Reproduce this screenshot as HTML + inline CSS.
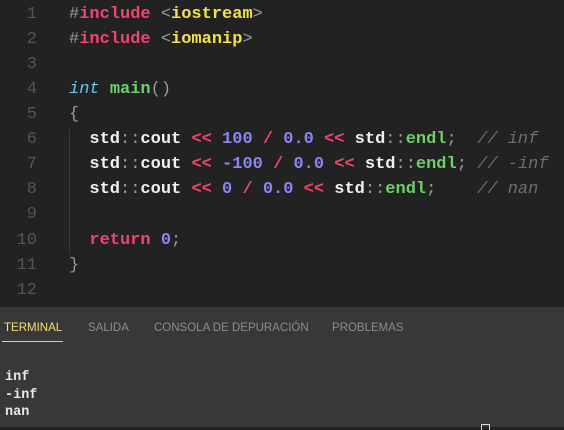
<!DOCTYPE html>
<html><head><style>
body{margin:0;width:564px;height:427px;overflow:hidden;background:#222222;}
.ed{position:absolute;left:0;top:0;width:564px;height:307px;background:#222222;font-family:"Liberation Mono",monospace;font-size:17px;}
.ln{position:absolute;left:0;width:37px;text-align:right;color:#555555;}
.c{position:absolute;left:69px;white-space:pre;color:#f0f0f0;font-weight:bold;}
.k{color:#f0446f}.s{color:#f2e24a}.g{color:#9a9a9a;font-weight:normal}.t{color:#5fc9ef;font-style:italic;font-weight:normal}
.f{color:#6fcf68}.n{color:#8a86f0}.cm{color:#6e6e6e;font-style:italic;font-weight:normal}
.guide{position:absolute;left:69px;top:129px;width:1px;height:125px;background:#3a3a3a}
.pn{position:absolute;left:0;top:307px;width:564px;height:120px;background:#38383b;font-family:"Liberation Sans",sans-serif;}
.tab{position:absolute;top:15px;font-size:11.5px;color:#8c8c8c}
.term{position:absolute;left:5px;top:62px;font-family:"Liberation Mono",monospace;font-size:13.5px;line-height:17.5px;color:#e8e8e8;font-weight:bold;white-space:pre}
</style></head><body>
<div class="ed">
<div class="guide"></div>
<div class="ln" style="top:5px">1</div><div class="c" style="top:5px"><span class="g">#</span><span class="k">include</span> <span class="g">&lt;</span><span class="s">iostream</span><span class="g">&gt;</span></div>
<div class="ln" style="top:30px">2</div><div class="c" style="top:30px"><span class="g">#</span><span class="k">include</span> <span class="g">&lt;</span><span class="s">iomanip</span><span class="g">&gt;</span></div>
<div class="ln" style="top:55px">3</div>
<div class="ln" style="top:80px">4</div><div class="c" style="top:80px"><span class="t">int</span> <span class="f">main</span><span class="g">()</span></div>
<div class="ln" style="top:105px">5</div><div class="c" style="top:105px"><span class="g">{</span></div>
<div class="ln" style="top:130px">6</div><div class="c" style="top:130px">  std<span class="g">::</span>cout <span class="k">&lt;&lt;</span> <span class="n">100</span> <span class="k">/</span> <span class="n">0.0</span> <span class="k">&lt;&lt;</span> std<span class="g">::</span><span class="f">endl</span><span class="g">;</span>  <span class="cm">// inf</span></div>
<div class="ln" style="top:155px">7</div><div class="c" style="top:155px">  std<span class="g">::</span>cout <span class="k">&lt;&lt;</span> <span class="n">-100</span> <span class="k">/</span> <span class="n">0.0</span> <span class="k">&lt;&lt;</span> std<span class="g">::</span><span class="f">endl</span><span class="g">;</span> <span class="cm">// -inf</span></div>
<div class="ln" style="top:180px">8</div><div class="c" style="top:180px">  std<span class="g">::</span>cout <span class="k">&lt;&lt;</span> <span class="n">0</span> <span class="k">/</span> <span class="n">0.0</span> <span class="k">&lt;&lt;</span> std<span class="g">::</span><span class="f">endl</span><span class="g">;</span>    <span class="cm">// nan</span></div>
<div class="ln" style="top:205px">9</div>
<div class="ln" style="top:231px">10</div><div class="c" style="top:231px">  <span class="k">return</span> <span class="n">0</span><span class="g">;</span></div>
<div class="ln" style="top:256px">11</div><div class="c" style="top:256px"><span class="g">}</span></div>
<div class="ln" style="top:281px">12</div>
</div>
<div class="pn">
<div class="tab" style="left:4px;color:#f0e070">TERMINAL</div>
<div style="position:absolute;left:2px;top:34px;width:61px;height:1px;background:#e8d860"></div>
<div class="tab" style="left:88px">SALIDA</div>
<div class="tab" style="left:154px">CONSOLA DE DEPURACIÓN</div>
<div class="tab" style="left:332px">PROBLEMAS</div>
<div class="term">inf
-inf
nan</div>
<div style="position:absolute;left:481px;top:117px;width:7px;height:5px;border:1px solid #ddd;border-bottom:none"></div>
</div>
</body></html>
